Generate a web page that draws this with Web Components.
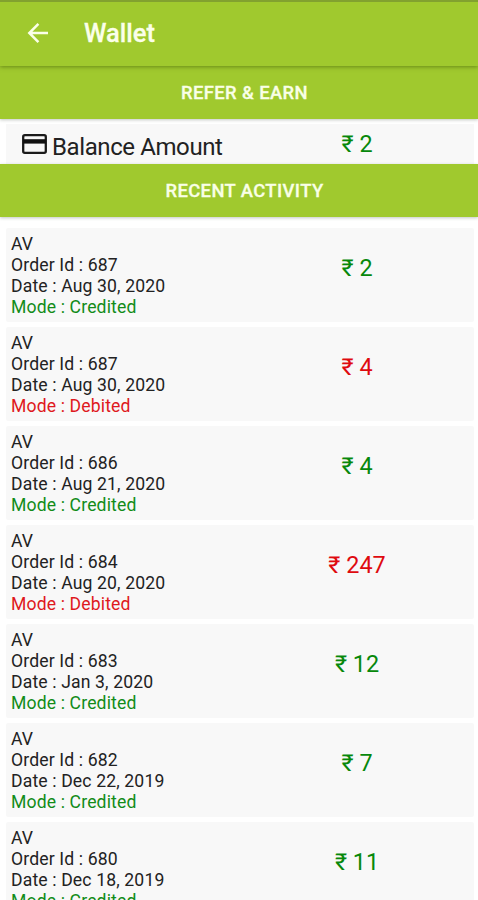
<!DOCTYPE html>
<html lang="en">
<head>
<meta charset="utf-8">
<title>Wallet</title>
<style>
  body {
    margin: 0;
    height: 900px;
    overflow: hidden;
    background: #fff;
    color: #222;
    font-family: Roboto, "Noto Sans", sans-serif;
  }
</style>
</head>
<body>
<wallet-app></wallet-app>

<script>
class AppBar extends HTMLElement {
    constructor() {
        super()
        this.attachShadow({mode: "open"}).innerHTML = `
        <style>
          :host {
            display: flex;
            align-items: center;
            gap: 35px;
            box-sizing: border-box;
            height: 66px;
            padding: 0 27px 2px;
            border-top: 2px solid #82a12f;
            background: #a0c92e;
            box-shadow: 0 1px 4px rgba(50, 75, 0, .5);
            position: relative;
            z-index: 1;
            color: #fbffe9;
          }
          svg { display: block; width: 22px; height: 22px; }
          h1 { margin: 0; font-size: 25.5px; line-height: 30px; font-weight: 500; -webkit-text-stroke: .3px; }
        </style>
        <svg viewBox="0 0 22 22" fill="none" stroke="currentColor" stroke-width="2.5">
          <path d="M21 11H2.8M11.4 1.8L2.3 11l9.1 9.2"/>
        </svg>
        <h1><slot></slot></h1>
      `
    }
}

class SectionButton extends HTMLElement {
    constructor() {
        super()
        this.attachShadow({mode: "open"}).innerHTML = `
        <style>
          :host {
            display: flex;
            align-items: center;
            justify-content: center;
            height: 52px;
            padding-left: 11px;
            background: #a0c92e;
            box-shadow: 0 1px 3px rgba(60, 70, 60, .3);
            color: #f9ffe6;
            font-size: 18.4px;
            font-weight: 500;
            letter-spacing: .4px;
            -webkit-text-stroke: .3px;
          }
        </style>
        <span><slot></slot></span>
      `
    }
}

class RupeeAmount extends HTMLElement {
    constructor() {
        super()
        this.attachShadow({mode: "open"}).innerHTML = `
        <style>
          :host {
            display: block;
            text-align: center;
            color: #07880b;
            font-size: 23.4px;
            line-height: 28px;
          }
          :host([debit]) { color: #df0a0f; }
        </style>
        <span>\u20B9 <slot></slot></span>
      `
    }
}

class BalanceCard extends HTMLElement {
    constructor() {
        super()
        this.attachShadow({mode: "open"}).innerHTML = `
        <style>
          :host {
            display: grid;
            grid-template-columns: 1fr 1fr;
            box-sizing: border-box;
            height: 40px;
            margin: 6px 4px 0 6px;
            padding-top: 6px;
            background: #f8f8f8;
          }
          .label { display: flex; align-items: center; padding: 4px 0 0 15px; gap: 5px; height: 26px; font-size: 24px; letter-spacing: -.4px; white-space: nowrap; }
          svg { width: 26px; height: 22px; margin-top: -6px; flex: none; }
        </style>
        <div class="label">
          <svg viewBox="0 0 26 22">
            <rect x="2.2" y="2.2" width="22.6" height="17.6" rx="1.6" fill="none" stroke="#1b1b1b" stroke-width="2.3"/>
            <path d="M2 6.2h23v4.4H2z" fill="#111"/>
          </svg>
          <span><slot></slot></span>
        </div>
        <rupee-amount>${this.getAttribute("amount")}</rupee-amount>
      `
    }
}

class ActivityRow extends HTMLElement {
    constructor() {
        super()
        const mode = this.getAttribute("mode")
        const debit = mode === "Debited"
        this.attachShadow({mode: "open"}).innerHTML = `
        <style>
          :host {
            display: grid;
            grid-template-columns: 1fr 1fr;
            box-sizing: border-box;
            height: 94px;
            padding-top: 5px;
            background: #f8f8f8;
            border-radius: 2px;
          }
          .details { padding: 1px 0 0 5px; font-size: 17.6px; line-height: 21px; letter-spacing: .14px; white-space: nowrap; }
          .mode { color: ${debit ? "#df1820" : "#128c18"}; }
          rupee-amount { margin-top: 21px; }
        </style>
        <div class="details">
          <div>AV</div>
          <div>Order Id : ${this.getAttribute("order")}</div>
          <div>Date : ${this.getAttribute("date")}</div>
          <div class="mode">Mode : ${mode}</div>
        </div>
        <rupee-amount ${debit ? "debit" : ""}>${this.getAttribute("amount")}</rupee-amount>
      `
    }
}

class WalletApp extends HTMLElement {
    constructor() {
        super()
        const activity = [
            ["687", "Aug 30, 2020", "Credited", 2],
            ["687", "Aug 30, 2020", "Debited", 4],
            ["686", "Aug 21, 2020", "Credited", 4],
            ["684", "Aug 20, 2020", "Debited", 247],
            ["683", "Jan 3, 2020", "Credited", 12],
            ["682", "Dec 22, 2019", "Credited", 7],
            ["680", "Dec 18, 2019", "Credited", 11]
        ]
        const rows = activity.map(([order, date, mode, amount]) =>
            `<activity-row order="${order}" date="${date}" mode="${mode}" amount="${amount}"></activity-row>`)

        this.attachShadow({mode: "open"}).innerHTML = `
        <style>
          :host { display: block; height: 900px; overflow: hidden; }
          section-button { height: 52.5px; }
          balance-card { margin-top: 5.5px; }
          .list { display: grid; gap: 5px; padding: 11.5px 4px 0 6px; }
        </style>
        <app-bar>Wallet</app-bar>
        <section-button>REFER &amp; EARN</section-button>
        <balance-card amount="2">Balance Amount</balance-card>
        <section-button>RECENT ACTIVITY</section-button>
        <div class="list">${rows.join("")}</div>
      `
    }
}

customElements.define("app-bar", AppBar)
customElements.define("section-button", SectionButton)
customElements.define("rupee-amount", RupeeAmount)
customElements.define("balance-card", BalanceCard)
customElements.define("activity-row", ActivityRow)
customElements.define("wallet-app", WalletApp)
</script>
</body>
</html>
